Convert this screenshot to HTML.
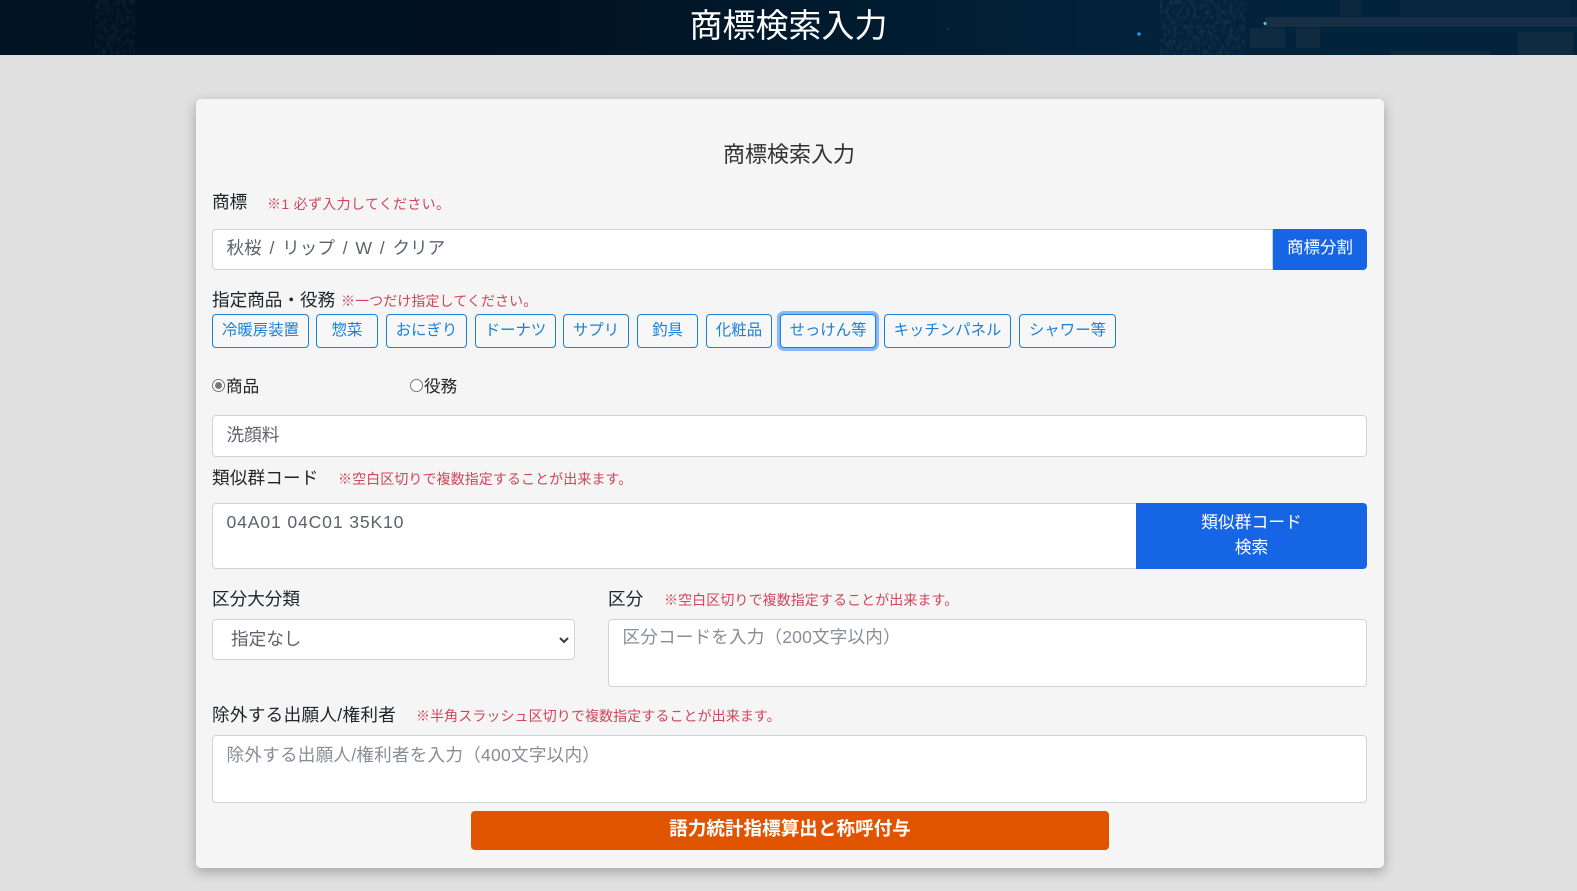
<!DOCTYPE html>
<html lang="ja"><head><meta charset="utf-8"><title>商標検索入力</title>
<style>
*{box-sizing:border-box}
html,body{margin:0;padding:0;width:1577px;height:891px;overflow:hidden;background:#e0e0e0;font-family:"Liberation Sans","Noto Sans CJK JP",sans-serif;color:#212529}
.a{position:absolute;white-space:nowrap}
.hdr{left:0;top:0;width:1577px;height:55px;overflow:hidden;background:linear-gradient(90deg,#011423 0%,#01111f 30%,#011a2d 52%,#02233b 72%,#03233c 100%)}
.card{left:196px;top:99px;width:1188px;height:769px;background:#f5f5f5;border-radius:5px;box-shadow:0 4px 12px rgba(0,0,0,.28)}
.l{font-size:17.6px;line-height:24px;color:#212529}
.n{font-size:14px;line-height:20px;color:#d0455a;letter-spacing:.08px}
.f{background:#fff;border:1px solid #ced4da;border-radius:4px;font-size:17.6px;color:#5c636a;padding:5px 13.5px;line-height:26px}
.ph{color:#868e96}
.b{background:#1565e4;color:#fff;text-align:center;font-size:16.5px}
.t{top:314px;height:34px;border:1px solid #1b80d8;border-radius:4px;color:#1b80d8;font-size:15.4px;line-height:32.5px;text-align:center;background:#f7f7f7}
.r{width:13px;height:13px;border-radius:50%;border:1px solid #767676;background:#fff;top:379px}
</style></head><body>
<div class="a hdr">
<svg width="1577" height="55" style="position:absolute;left:0;top:0">
<defs>
<filter id="nz" x="0" y="0" width="100%" height="100%"><feTurbulence type="fractalNoise" baseFrequency="0.3 0.2" numOctaves="2" seed="4"/><feGaussianBlur stdDeviation=".6"/><feColorMatrix values="0 0 0 0 .5  0 0 0 0 .62  0 0 0 0 .72  1.6 0 0 0 -.65"/></filter>
</defs>
<rect x="95" y="0" width="40" height="55" filter="url(#nz)" opacity=".12"/>
<rect x="1160" y="0" width="85" height="55" filter="url(#nz)" opacity=".16"/>
<rect x="1265" y="17" width="312" height="10" fill="#1f3447" opacity=".75"/>
<rect x="1250" y="28" width="35" height="20" fill="#1d3243" opacity=".5"/>
<rect x="1296" y="28" width="24" height="20" fill="#1d3243" opacity=".5"/>
<rect x="1518" y="32" width="55" height="23" fill="#1d3243" opacity=".5"/>
<rect x="1340" y="0" width="22" height="16" fill="#1a3346" opacity=".3"/>
<rect x="1400" y="0" width="170" height="16" fill="#12304a" opacity=".35"/>
<rect x="1390" y="51" width="100" height="4" fill="#1d3243" opacity=".4"/>
<circle cx="1265" cy="23.5" r="1.5" fill="#6fbde6"/>
<circle cx="1139" cy="34" r="1.8" fill="#1f9bdc"/>
<circle cx="948" cy="29" r=".8" fill="#15628a"/>
</svg>
<div class="a" style="left:0;width:1577px;top:4px;text-align:center;color:#fff;font-size:33px;line-height:44px">商標検索入力</div>
</div>
<div class="a card"></div>

<div class="a" style="left:195px;width:1188px;top:139px;text-align:center;font-size:22px;line-height:32px;color:#333">商標検索入力</div>

<div class="a l" style="left:212px;top:190px">商標</div>
<div class="a n" style="left:267px;top:194px;letter-spacing:.32px">※1 必ず入力してください。</div>
<div class="a f" style="left:212px;top:229px;width:1061px;height:41px;border-radius:4px 0 0 4px;word-spacing:2.9px">秋桜 / リップ / W / クリア</div>
<div class="a b" style="left:1273px;top:229px;width:94px;height:41px;line-height:38px;border-radius:0 4px 4px 0">商標分割</div>

<div class="a l" style="left:212px;top:288px">指定商品・役務</div>
<div class="a n" style="left:341px;top:291px">※一つだけ指定してください。</div>

<div class="a t" style="left:212px;width:97px">冷暖房装置</div>
<div class="a t" style="left:316px;width:62px">惣菜</div>
<div class="a t" style="left:386px;width:81px">おにぎり</div>
<div class="a t" style="left:475px;width:81px">ドーナツ</div>
<div class="a t" style="left:563px;width:66px">サプリ</div>
<div class="a t" style="left:637px;width:61px">釣具</div>
<div class="a t" style="left:706px;width:66px">化粧品</div>
<div class="a t" style="left:780px;width:96px;box-shadow:0 0 0 3px #86b7fe;border-color:#1b80d8">せっけん等</div>
<div class="a t" style="left:884px;width:127px">キッチンパネル</div>
<div class="a t" style="left:1019px;width:97px">シャワー等</div>

<div class="a r" style="left:212px"></div>
<div class="a" style="left:215px;top:382px;width:7px;height:7px;border-radius:50%;background:#777"></div>
<div class="a" style="left:226px;top:375px;font-size:16.6px;line-height:24px">商品</div>
<div class="a r" style="left:410px"></div>
<div class="a" style="left:424px;top:375px;font-size:16.6px;line-height:24px">役務</div>

<div class="a f" style="left:212px;top:415px;width:1155px;height:42px;padding-top:6px">洗顔料</div>

<div class="a l" style="left:212px;top:466px;letter-spacing:.15px">類似群コード</div>
<div class="a n" style="left:338px;top:469px">※空白区切りで複数指定することが出来ます。</div>
<div class="a f" style="left:212px;top:503px;width:925px;height:66px;border-radius:4px 0 0 4px;letter-spacing:.85px">04A01 04C01 35K10</div>
<div class="a b" style="left:1136px;top:503px;width:231px;height:66px;border-radius:0 4px 4px 0;line-height:25px;padding-top:7px;font-size:16.8px">類似群コード<br>検索</div>

<div class="a l" style="left:212px;top:587px">区分大分類</div>
<div class="a f" style="left:212px;top:619px;width:363px;height:41px;padding-left:18px;padding-top:6px">指定なし</div>
<svg class="a" style="left:558px;top:636px" width="12" height="8" viewBox="0 0 12 8"><path d="M2 2l4 4 4-4" fill="none" stroke="#343a40" stroke-width="2"/></svg>

<div class="a l" style="left:608px;top:587px">区分</div>
<div class="a n" style="left:664px;top:590px">※空白区切りで複数指定することが出来ます。</div>
<div class="a f ph" style="left:608px;top:619px;width:759px;height:68px;padding-top:4px;letter-spacing:.15px">区分コードを入力（200文字以内）</div>

<div class="a l" style="left:212px;top:703px;letter-spacing:.3px">除外する出願人/権利者</div>
<div class="a n" style="left:416px;top:706px">※半角スラッシュ区切りで複数指定することが出来ます。</div>
<div class="a f ph" style="left:212px;top:735px;width:1155px;height:68px;padding-top:6px;letter-spacing:.22px">除外する出願人/権利者を入力（400文字以内）</div>

<div class="a" style="left:471px;top:811px;width:638px;height:39px;background:#e05400;border-radius:4px;color:#fff;font-weight:700;font-size:18.6px;line-height:35px;text-align:center">語力統計指標算出と称呼付与</div>
</body></html>
